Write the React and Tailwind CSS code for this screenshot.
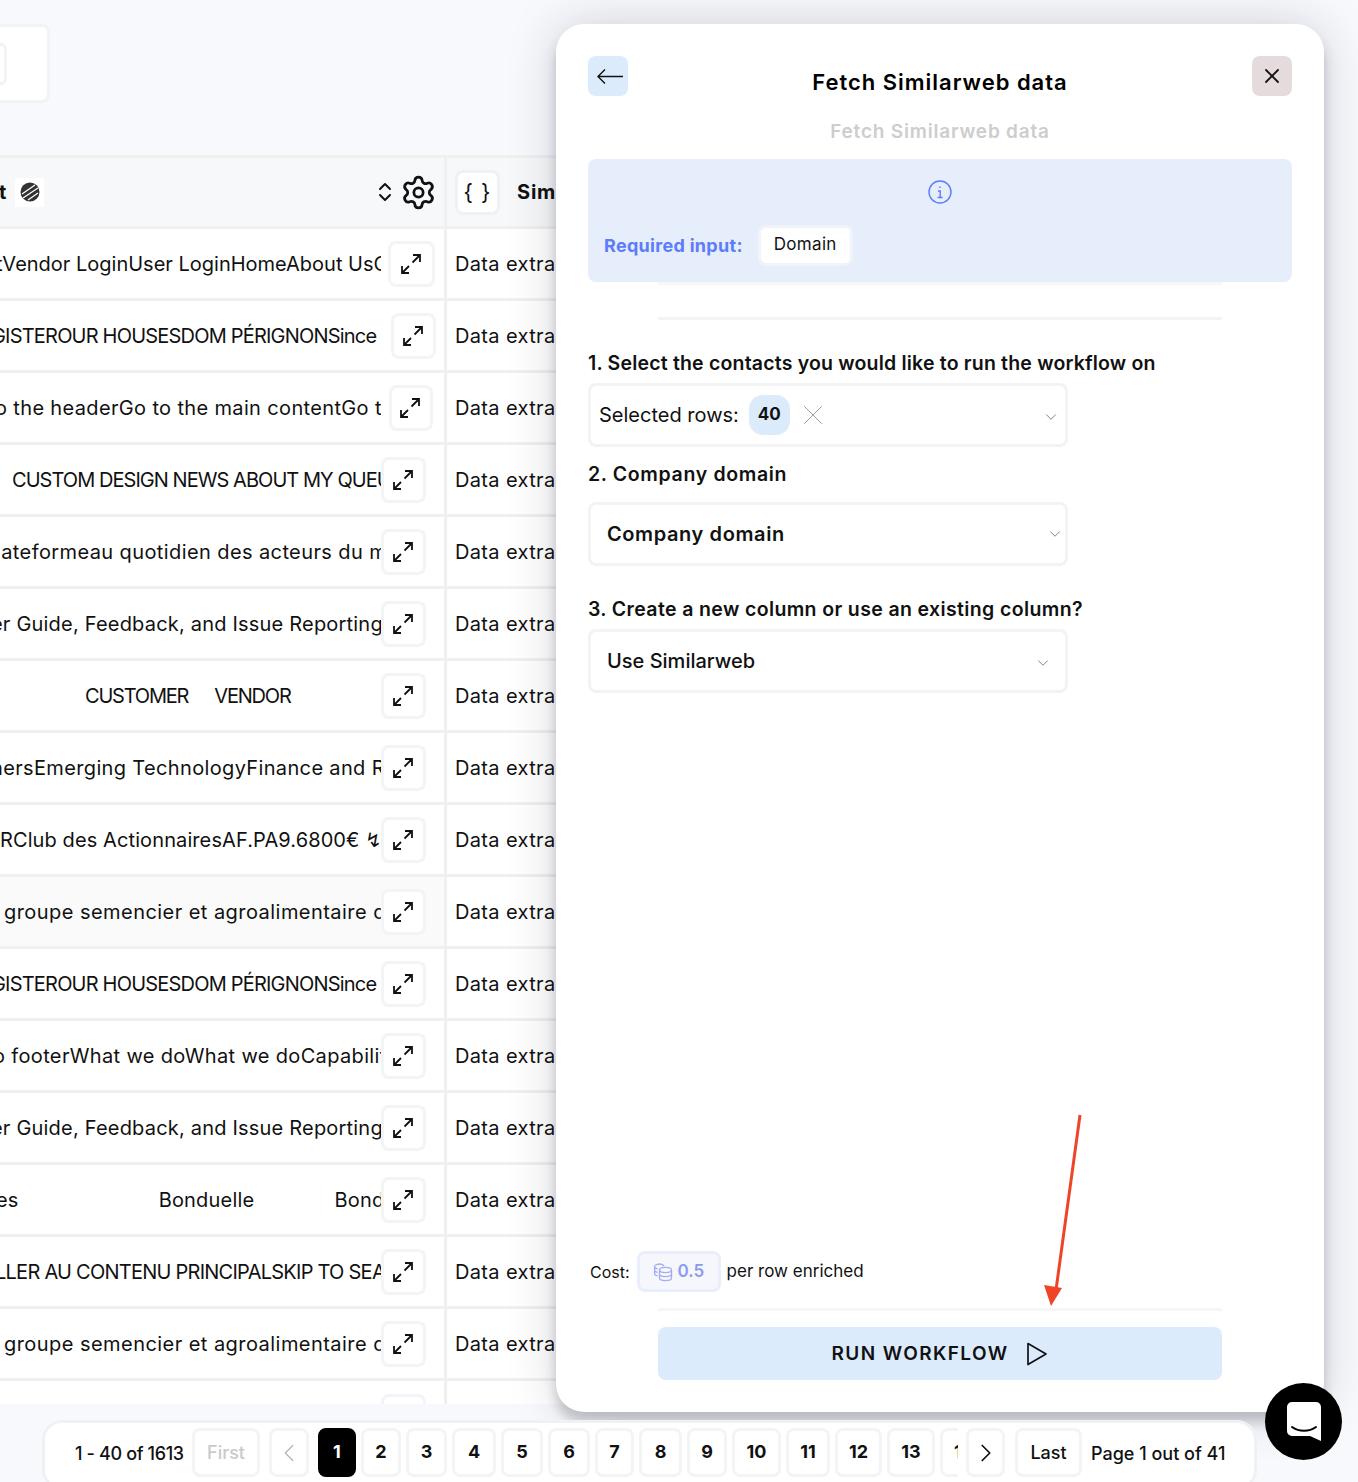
import { ChevronDown, ChevronLeft, ChevronRight, ChevronsUpDown, Settings, X } from "lucide-react";

const rows = [
  { text: "tVendor LoginUser LoginHomeAbout UsContact", offset: "-ml-[4px] tracking-normal", btn: "ml-[7px] w-[47px]" },
  { text: "GISTEROUR HOUSESDOM PÉRIGNONSince 1", offset: "-ml-[9px] tracking-[-0.8px]", btn: "ml-[10px] w-[45px]" },
  { text: "o the headerGo to the main contentGo to the", offset: "-ml-[5px] tracking-[0.35px]", btn: "ml-[8px] w-[44px]" },
  { text: "CUSTOM DESIGN NEWS ABOUT MY QUEUE", offset: "ml-[12px] tracking-[-0.95px]", btn: "ml-0 w-[45px]" },
  { text: "lateformeau quotidien des acteurs du monde", offset: "-ml-[4px] tracking-[0.4px]", btn: "ml-0 w-[45px]" },
  { text: "er Guide, Feedback, and Issue Reporting", offset: "-ml-[9px] tracking-[0.2px]", btn: "ml-0 w-[45px]" },
  { custom: "customer", btn: "ml-0 w-[45px]" },
  { text: "hersEmerging TechnologyFinance and Risk", offset: "-ml-[9px] tracking-[0.35px]", btn: "ml-0 w-[45px]" },
  { text: "RClub des ActionnairesAF.PA9.6800€ ↯N", offset: "ml-0 tracking-[0.1px]", btn: "ml-0 w-[45px]" },
  { text: "groupe semencier et agroalimentaire de", offset: "ml-[4px] tracking-[0.45px]", btn: "ml-0 w-[45px]", hover: true },
  { text: "GISTEROUR HOUSESDOM PÉRIGNONSince 1", offset: "-ml-[9px] tracking-[-0.8px]", btn: "ml-0 w-[45px]" },
  { text: "o footerWhat we doWhat we doCapabilities", offset: "-ml-[7px] tracking-[0.35px]", btn: "ml-0 w-[45px]" },
  { text: "er Guide, Feedback, and Issue Reporting", offset: "-ml-[9px] tracking-[0.2px]", btn: "ml-0 w-[45px]" },
  { custom: "bonduelle", btn: "ml-0 w-[45px]" },
  { text: "LLER AU CONTENU PRINCIPALSKIP TO SEARCH", offset: "-ml-[5px] tracking-[-0.75px]", btn: "ml-0 w-[45px]" },
  { text: "groupe semencier et agroalimentaire de", offset: "ml-[4px] tracking-[0.45px]", btn: "ml-0 w-[45px]" },
];

const pages = [
  { n: "1", w: "w-[38px]", active: true },
  { n: "2", w: "w-[40px]" },
  { n: "3", w: "w-[41px]" },
  { n: "4", w: "w-[44px]" },
  { n: "5", w: "w-[42px]" },
  { n: "6", w: "w-[42px]" },
  { n: "7", w: "w-[39px]" },
  { n: "8", w: "w-[43px]" },
  { n: "9", w: "w-[40px]" },
  { n: "10", w: "w-[49px]" },
  { n: "11", w: "w-[44px]" },
  { n: "12", w: "w-[47px]" },
  { n: "13", w: "w-[48px]" },
];

const ExpandIcon = () => (
  <svg className="mr-[2px]" width="22" height="22" viewBox="0 0 22 22" fill="none" stroke="#111" strokeWidth="1.8">
    <path d="M13 2h7v7M20 2l-7.5 7.5" />
    <path d="M2 13v7h7M2 20l7-7" />
  </svg>
);

const RowCell = ({ row }) => (
  <div className="flex h-[72px] border-b-[3px] border-[#f0f0f1]">
    <div className={`flex w-[447px] shrink-0 items-center border-r-[3px] border-[#f0f0f1] ${row.hover ? "bg-[#fafafa]" : ""}`}>
      <div className="w-[381px] shrink-0 overflow-hidden whitespace-nowrap text-[20px]">
        {row.custom === "customer" && (
          <div className="flex tracking-[-1.2px]">
            <span className="ml-[85px]">CUSTOMER</span>
            <span className="ml-[26px]">VENDOR</span>
          </div>
        )}
        {row.custom === "bonduelle" && (
          <div className="flex tracking-[0.2px]">
            <span className="-ml-[4px]">es</span>
            <span className="ml-[140px]">Bonduelle</span>
            <span className="ml-[80px]">Bonduelle</span>
          </div>
        )}
        {row.text && <div className={row.offset}>{row.text}</div>}
      </div>
      <div className={`${row.btn} flex h-[46px] items-center justify-center rounded-lg border-[3px] border-[#f3f4f6] bg-white`}>
        <ExpandIcon />
      </div>
    </div>
    <div className="whitespace-nowrap pl-[8px] pt-[20px] text-[20px] tracking-[0.35px]">Data extracted</div>
  </div>
);

const Table = () => (
  <div className="h-[1249px] w-[1324px] shrink-0 overflow-hidden bg-white">
    <div className="flex h-[74px] border-y-[3px] border-[#f0f0f1] bg-[#f7f8fa]">
      <div className="flex w-[447px] shrink-0 items-center border-r-[3px] border-[#f0f0f1]">
        <span className="w-[15px] -translate-x-[1px] text-[20px] font-bold">t</span>
        <div className="flex h-[29px] w-[29px] items-center justify-center bg-white">
          <svg width="20" height="20" viewBox="0 0 20 20">
            <circle cx="10" cy="10" r="9.5" fill="#333" />
            <path d="M2 12L15 3M3 16L18 6M8 18l10-7" stroke="#fff" strokeWidth="1.3" />
          </svg>
        </div>
        <ChevronsUpDown size={24} strokeWidth={2} className="ml-auto" color="#111" />
        <Settings size={37} strokeWidth={1.8} color="#111" className="ml-[3px] mr-[7px]" />
      </div>
      <div className="ml-[8px] flex h-[45px] w-[45px] shrink-0 items-center justify-center self-center rounded-lg border-[3px] border-[#f0f1f3] bg-white text-[22px] tracking-[1px]">
        {"{ }"}
      </div>
      <div className="ml-[17px] self-center whitespace-nowrap text-[20px] font-bold tracking-[0.8px]">Similarweb</div>
    </div>
    {rows.map((row, i) => (
      <RowCell key={i} row={row} />
    ))}
    <div className="flex h-[40px]">
      <div className="w-[447px] shrink-0 border-r-[3px] border-[#f0f0f1] pl-[381px] pt-[13px]">
        <div className="h-[46px] w-[45px] rounded-lg border-[3px] border-[#f3f4f6]" />
      </div>
    </div>
  </div>
);

const Pagination = () => (
  <div className="relative z-20 ml-[42px] mt-[16px] flex h-[70px] w-[1215px] shrink-0 items-start rounded-[20px] border-[3px] border-[#f0f1f4] bg-white pl-[30px] pt-[5px]">
    <span className="mt-[12px] w-[117px] whitespace-nowrap text-[18px] font-medium tracking-[-0.35px]">1 - 40 of 1613</span>
    <div className="flex h-[49px] w-[68px] items-center justify-center rounded-lg border-[3px] border-[#f3f4f6] text-[18px] font-medium text-[#c8c9cc]">First</div>
    <div className="ml-[9px] flex h-[49px] w-[40px] items-center justify-center rounded-lg border-[3px] border-[#f3f4f6]">
      <ChevronLeft size={30} strokeWidth={1} color="#b5b5b8" />
    </div>
    <div className="ml-[9px] flex gap-[5px]">
      {pages.map((p) => (
        <div
          key={p.n}
          className={`flex h-[49px] ${p.w} items-center justify-center rounded-lg border-[3px] pb-[3px] text-[18px] font-bold ${
            p.active ? "border-black bg-black text-white" : "border-[#f3f4f6] text-[#111]"
          }`}
        >
          {p.n}
        </div>
      ))}
      <div className="h-[49px] w-[18px] overflow-hidden">
        <div className="flex h-[49px] w-[48px] items-center justify-center rounded-lg border-[3px] border-[#f3f4f6] pb-[3px] text-[18px] font-bold">14</div>
      </div>
    </div>
    <div className="ml-[8px] flex h-[49px] w-[39px] items-center justify-center rounded-lg border-[3px] border-[#f3f4f6]">
      <ChevronRight size={30} strokeWidth={1.4} color="#111" />
    </div>
    <div className="ml-[10px] flex h-[49px] w-[67px] items-center justify-center rounded-lg border-[3px] border-[#f3f4f6] text-[18px] font-medium">Last</div>
    <span className="ml-[9px] mt-[12px] whitespace-nowrap text-[18px] font-medium">Page 1 out of 41</span>
  </div>
);

const Modal = () => (
  <div className="absolute left-[556px] top-[24px] z-10 flex h-[1388px] w-[768px] flex-col rounded-[28px] bg-white px-[32px] pb-[32px] pt-[32px] shadow-[0_0_50px_rgba(30,35,50,0.18),0_10px_12px_rgba(30,35,50,0.22)]">
    <div className="flex items-start justify-between">
      <div className="flex h-[40px] w-[40px] items-center justify-center rounded-lg bg-[#dcebfc]">
        <svg className="ml-[4px]" width="26" height="17" viewBox="0 0 26 17" fill="none" stroke="#111" strokeWidth="1.4">
          <path d="M1 8.500h25M8 1.500l-7 7 7 7" />
        </svg>
      </div>
      <h1 className="mt-[10px] text-[22px] font-semibold leading-[32px] tracking-[0.98px] text-black">Fetch Similarweb data</h1>
      <div className="flex h-[40px] w-[40px] items-center justify-center rounded-lg bg-[#e5dadc]">
        <X size={24} strokeWidth={1.8} color="#111" />
      </div>
    </div>
    <p className="mt-[22px] text-center text-[19px] font-semibold leading-[24px] tracking-[0.8px] text-[#cdcdcd]">Fetch Similarweb data</p>
    <div className="mt-[15px] h-[123px] rounded-lg bg-[#e6edfb] px-[16px] pt-[21px]">
      <div className="flex justify-center">
        <svg width="24" height="24" viewBox="0 0 24 24" fill="none" stroke="#5c7cfa" strokeWidth="1.4">
          <circle cx="12" cy="12" r="11" />
          <path d="M12 6.600v1.400M10 11h2.200v6.500M9.600 17.500h5" />
        </svg>
      </div>
      <div className="mt-[21px] flex items-center">
        <span className="text-[18px] font-bold tracking-[0.3px] text-[#5c7cfa]">Required input:</span>
        <span className="ml-[15px] flex h-[41px] w-[95px] items-center justify-center rounded-lg border-[3px] border-[#f0f3fa] bg-white pb-[2px] text-[17px] tracking-[0.3px]">Domain</span>
      </div>
    </div>
    <div className="mx-[70px] h-[3px] bg-[#f6f6f6]" />
    <div className="mx-[70px] mt-[32px] h-[3px] bg-[#f4f4f4]" />
    <h2 className="mt-[29px] text-[19.5px] font-semibold leading-[28px] tracking-[0.19px] text-[#111]">1. Select the contacts you would like to run the workflow on</h2>
    <div className="mt-[6px] flex h-[64px] w-[480px] items-center rounded-lg border-[3px] border-[#f2f3f5] pl-[8px] pr-[5px]">
      <span className="text-[20px]">Selected rows:</span>
      <span className="ml-[10px] flex h-[40px] w-[41px] items-center justify-center rounded-[14px] bg-[#dcebfc] text-[17px] font-bold">40</span>
      <X size={34} strokeWidth={0.7} color="#a09a9c" className="ml-[6px]" />
      <ChevronDown size={18} strokeWidth={1.2} color="#777" className="ml-auto mt-[4px]" />
    </div>
    <h2 className="mt-[13px] text-[19.5px] font-semibold leading-[28px] tracking-[0.65px] text-[#111]">2. Company domain</h2>
    <div className="mt-[14px] flex h-[64px] w-[480px] items-center justify-between rounded-lg border-[3px] border-[#f2f3f5] pl-[16px] pr-[1px]">
      <span className="text-[20px] font-semibold tracking-[0.6px]">Company domain</span>
      <ChevronDown size={18} strokeWidth={1.2} color="#777" />
    </div>
    <h2 className="mt-[29px] text-[19.5px] font-semibold leading-[28px] tracking-[0.37px] text-[#111]">3. Create a new column or use an existing column?</h2>
    <div className="mt-[6px] flex h-[64px] w-[480px] items-center justify-between rounded-lg border-[3px] border-[#f2f3f5] pl-[16px] pr-[13px]">
      <span className="text-[20px] font-medium">Use Similarweb</span>
      <ChevronDown size={18} strokeWidth={1.2} color="#777" className="mt-[4px]" />
    </div>

    <div className="mt-auto flex items-center pl-[2px]">
      <span className="text-[16px]">Cost:</span>
      <div className="ml-[7px] flex h-[41px] w-[84px] items-center rounded-lg border-[3px] border-[#e8eefc] bg-[#f5f7fd] pl-[13px]">
        <svg width="20" height="20" viewBox="0 0 20 20" fill="none" stroke="#a3aef0" strokeWidth="1.3">
          <ellipse cx="12.500" cy="8" rx="6" ry="2.600" />
          <path d="M6.500 8v8c0 1.400 2.700 2.600 6 2.600s6-1.200 6-2.600V8M6.500 12c0 1.400 2.700 2.600 6 2.600s6-1.200 6-2.600" />
          <path d="M11 4.200C10.200 2.600 8.600 2 7 2 4 2 1.600 3.200 1.600 4.600v7c0 1 1 1.900 3 2.300M1.600 8c0 1 1 1.900 3 2.300M1.600 4.600c0 1 1 1.900 3 2.300" />
        </svg>
        <span className="ml-[5px] text-[17px] font-semibold text-[#8c9bf0]">0.5</span>
      </div>
      <span className="ml-[6px] text-[17px]">per row enriched</span>
    </div>
    <div className="mx-[70px] mt-[16px] h-[3px] bg-[#f6f6f6]" />
    <div className="mx-[70px] mt-[16px] flex h-[53px] items-center justify-center rounded-lg bg-[#dcebfc]">
      <span className="pt-[1px] text-[19px] font-semibold tracking-[1.4px] text-[#111]">RUN WORKFLOW</span>
      <svg className="ml-[18px]" width="22" height="26" viewBox="0 0 22 26" fill="none" stroke="#111" strokeWidth="1.7" strokeLinejoin="round">
        <path d="M2 2.500L20 13 2 23.500Z" />
      </svg>
    </div>
  </div>
);

export default function App() {
  return (
    <div className="relative flex h-[1482px] w-[1358px] flex-col overflow-hidden bg-[#f8f9fd] font-['Inter',sans-serif] text-[#111]">
      <div className="h-[155px] shrink-0 pt-[24px]">
        <div className="-ml-[20px] flex h-[79px] w-[70px] items-center rounded-lg border-[3px] border-[#f2f3f6] bg-white">
          <div className="h-[42px] w-[24px] rounded-md border-[3px] border-[#f2f3f6]" />
        </div>
      </div>
      <Table />
      <Pagination />
      <Modal />
      {/* red annotation arrow */}
      <svg className="absolute left-[1040px] top-[1110px] z-30" width="50" height="200" viewBox="0 0 50 200">
        <path d="M40 5L16 180" stroke="#ee4527" strokeWidth="3" fill="none" />
        <path d="M4 175L22 178 11 196Z" fill="#ee4527" />
      </svg>
      <div className="absolute left-[1265px] top-[1383px] z-30 flex h-[77px] w-[77px] items-center justify-center rounded-full bg-black">
        <svg width="34" height="40" viewBox="0 0 34 40">
          <path d="M5 0h24a5 5 0 0 1 5 5v34l-11-5H5a5 5 0 0 1-5-5V5a5 5 0 0 1 5-5z" fill="#fff" />
          <path d="M5 25c7 5 17 5 24 0" fill="none" stroke="#000" strokeWidth="2" strokeLinecap="round" />
        </svg>
      </div>
    </div>
  );
}
